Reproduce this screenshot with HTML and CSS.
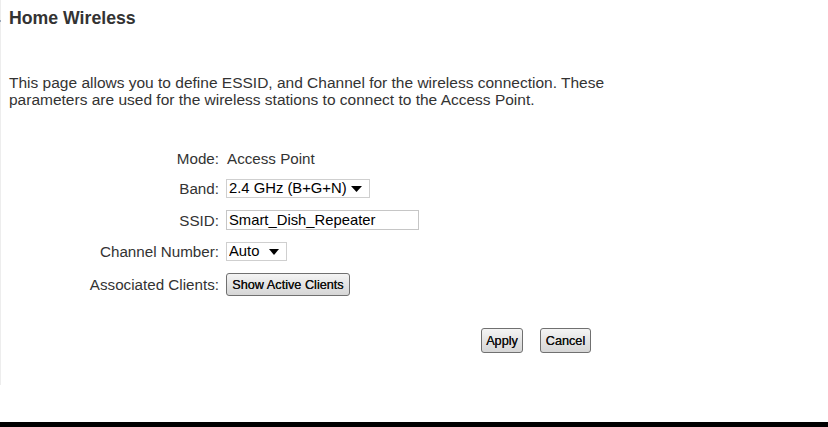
FILE: index.html
```html
<!DOCTYPE html>
<html lang="en">
<head>
  <meta charset="UTF-8">
  <title>Home Wireless</title>
  <link rel="stylesheet" href="styles.css">
</head>
<body>
  <div class="page">
    <h1><span class="mark"></span>Home Wireless</h1>
    <p class="intro">This page allows you to define ESSID, and Channel for the wireless connection. These<br>
      parameters are used for the wireless stations to connect to the Access Point.</p>

    <form class="wlan-form">
      <span class="label">Mode:</span>
      <span class="value">Access Point</span>

      <label class="label" for="band">Band:</label>
      <span class="select band">
        <select id="band" name="band">
          <option>2.4 GHz (B+G+N)</option>
        </select>
        <svg width="11" height="6" viewBox="0 0 11 6"><path d="M0 0h11L5.5 6z" fill="#000"/></svg>
      </span>

      <label class="label" for="ssid">SSID:</label>
      <span><input type="text" id="ssid" name="ssid" value="Smart_Dish_Repeater"></span>

      <label class="label" for="channel">Channel Number:</label>
      <span class="select channel">
        <select id="channel" name="channel">
          <option>Auto</option>
        </select>
        <svg width="10" height="6" viewBox="0 0 10 6"><path d="M0 0h10L5 6z" fill="#000"/></svg>
      </span>

      <span class="label">Associated Clients:</span>
      <span><button type="button" class="btn clients">Show Active Clients</button></span>

      <div class="actions">
        <button type="button" class="btn apply">Apply</button>
        <button type="button" class="btn cancel">Cancel</button>
      </div>
    </form>
  </div>
  <div class="bottom-bar"></div>
</body>
</html>
```

FILE: styles.css
```css
html, body {
  margin: 0;
  padding: 0;
  background: #fff;
}
body {
  height: 427px;
  display: flex;
  flex-direction: column;
  font-family: "Liberation Sans", Arial, sans-serif;
  color: #333;
  overflow: hidden;
}
.page {
  height: 385px;
  border-left: 1px solid #ededed;
  padding-left: 8px;
}
h1 {
  position: relative;
  margin: 8px 0 0;
  font-size: 17.7px;
  line-height: 20px;
  font-weight: bold;
  color: #333;
}
.mark {
  position: absolute;
  left: -9px;
  top: 12px;
  width: 1px;
  height: 2px;
  background: #9aa8ba;
}
.intro {
  margin: 46px 0 0;
  font-size: 15.5px;
  line-height: 17px;
  color: #333;
}
.wlan-form {
  display: grid;
  grid-template-columns: 210px auto;
  column-gap: 7px;
  row-gap: 12px;
  align-items: center;
  margin-top: 42px;
  font-size: 15.2px;
  line-height: 17px;
}
.label {
  text-align: right;
  color: #333;
}
.value {
  padding-left: 1px;
}
.select {
  display: inline-flex;
  align-items: center;
  height: 17px;
  border: 1px solid #cfcfcf;
  background: #fff;
  padding: 0 7px 0 0;
}
.select select {
  appearance: none;
  -webkit-appearance: none;
  border: none;
  background: transparent;
  font: inherit;
  font-size: 14.8px;
  color: #000;
  padding: 0 0 0 2px;
  margin: 0;
  outline: none;
  height: 17px;
}
.band {
  width: 135px;
}
.band select {
  width: 124px;
}
.channel {
  width: 52px;
}
.channel select {
  width: 42px;
}
input[type="text"] {
  width: 189px;
  height: 18px;
  border: 1px solid #c6c6c6;
  padding: 0 0 0 2px;
  margin: 0;
  font: inherit;
  font-size: 14.8px;
  color: #000;
  outline: none;
}
.btn {
  font-family: "Liberation Sans", Arial, sans-serif;
  font-size: 12.7px;
  color: #111;
  border: 1px solid #707070;
  border-radius: 3px;
  background: linear-gradient(#f4f4f4, #e4e4e4 50%, #d6d6d6);
  padding: 0;
  margin: 0;
  cursor: pointer;
  text-shadow: 0 0 0.4px #111;
}
.clients {
  width: 124px;
  height: 23px;
}
.actions {
  grid-column: 1 / span 2;
  display: flex;
  gap: 17px;
  padding-left: 472px;
  margin-top: 20px;
}
.apply {
  width: 42px;
  height: 25px;
}
.cancel {
  width: 51px;
  height: 25px;
}
.bottom-bar {
  margin-top: auto;
  height: 5px;
  background: #000;
}
```
